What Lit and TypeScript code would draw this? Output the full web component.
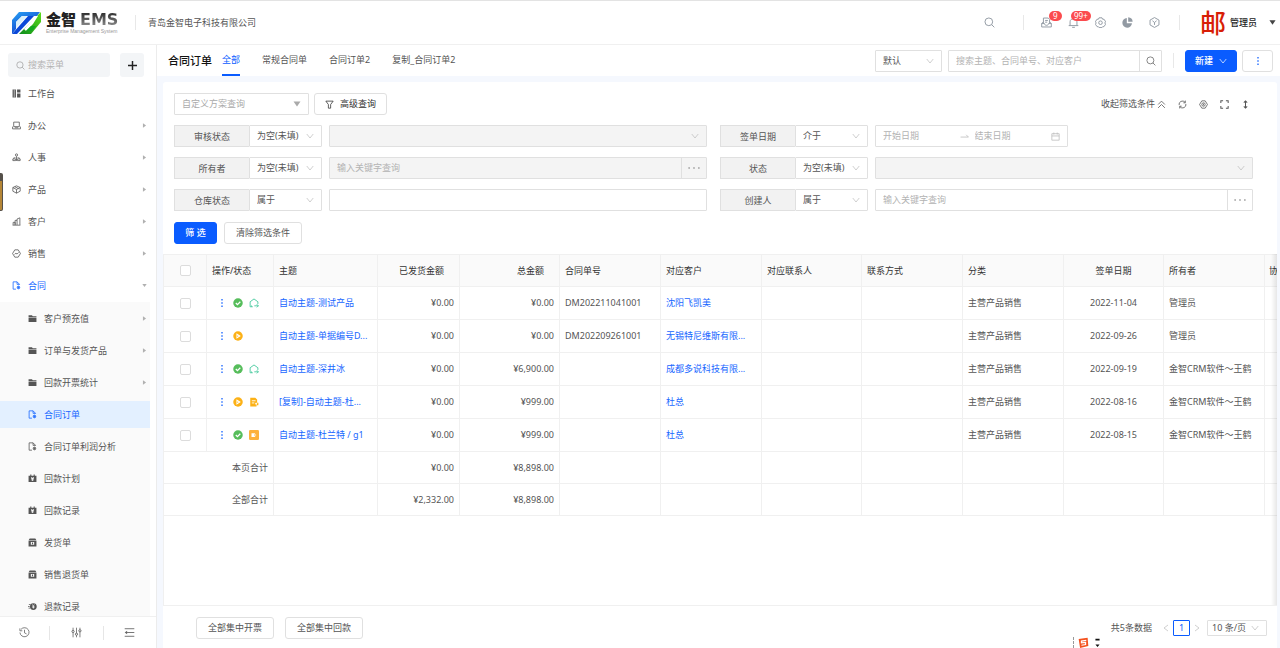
import { LitElement, html, css, svg, nothing, TemplateResult } from "lit";
import { customElement, state } from "lit/decorators.js";
import { classMap } from "lit/directives/class-map.js";

/* ---------- icons ---------- */

const line = (body: unknown, cls = "ic") =>
  html`<svg class=${cls} viewBox="0 0 16 16" fill="none" stroke="currentColor" stroke-width="1.4" aria-hidden="true">${body}</svg>`;
const solid = (body: unknown, cls = "ic") =>
  html`<svg class=${cls} viewBox="0 0 16 16" fill="currentColor" aria-hidden="true">${body}</svg>`;

const icons: Record<string, () => TemplateResult> = {
  search: () => line(svg`<circle cx="7" cy="7" r="5.6"/><path d="M11 11l4 4"/>`),
  plus: () => line(svg`<path d="M8 0v16M0 8h16" stroke-width="2.6"/>`),
  board: () => solid(svg`<path d="M1 1h6v14H1zM9 1h6v5H9zM9 8h6v7H9z"/><path d="M4 1v14" stroke="#fff"/>`),
  desk: () => line(svg`<path d="M3 2h10v8H3zM1 10v4h14v-4M5 12h6"/>`),
  people: () => line(svg`<circle cx="8" cy="3.5" r="2"/><path d="M8 6v8M2 9.5l4-1.500M14 9.500l-4-1.500M1.500 10.500h5v3h-5zM9.500 10.500h5v3h-5z"/>`),
  box: () => line(svg`<path d="M8 1.500l6.500 3v6.500L8 14.500 1.500 11V4.500zM1.500 4.500L8 8l6.500-3.500M8 8v6.500M5 3l6.500 3.500"/>`),
  chart: () => line(svg`<path d="M1 14.500h14M2 14V9.500h3.500V14M5.500 14V6H9v8M9 6V3.500L14 1.500V14"/>`),
  sale: () => line(svg`<path d="M5 1.500h6L15 8l-4 6.500H5L1 8zM4.500 9.500l2.500-2 2 1.500 3-3"/>`),
  contract: () => line(svg`<path d="M7 14.500H2v-13h7l4 4V7M9 1.500V6h4"/><circle cx="11.500" cy="11.500" r="2.200"/><path d="M11.500 8.500v6M8.800 10l5.400 3M14.200 10l-5.400 3" stroke-width="1"/>`),
  folder: () => solid(svg`<path d="M1 2h6l1.500 2H15v2H1zM1 7h14v7H1z"/>`),
  cash: () => solid(svg`<path fill-rule="evenodd" d="M4 1h2v2h4V1h2v2h3v11H1V3h3zM5 5.500l2 2.200H5.500v1.200h1.800v1H5.500V11h1.800v1.500h1.400V11h1.800V9.900H8.700v-1h1.800V7.700H9l2-2.200H9.500L8 7.200 6.500 5.500z"/>`),
  cargo: () => solid(svg`<path fill-rule="evenodd" d="M3 1h10l2 3H1zM1 5h14v10H1zM5 7v5h6V7zM7 8h2v3H7z"/>`),
  refund: () => solid(svg`<path fill-rule="evenodd" d="M9.500 2a6 6 0 1 1 0 12 6 6 0 0 1 0-12zM7 4.500l1.800 2.700H7.300v1h1.500v1H7.300v1h1.500v1.500h1.400v-1.500h1.500v-1h-1.500v-1h1.500v-1h-1.500L12 4.500h-1.300L9.500 6.500 8.300 4.500z"/><path d="M0 7h3v1.500H0zM1 10h3v1.500H1zM1.500 4h3v1.500h-3z"/>`),
  history: () => line(svg`<path d="M3 3.300A6.600 6.600 0 1 1 1.400 8M1.300 2v3.500h3.500M8 4v4.500l3 1.500" stroke-width="1.200"/>`, "ic lg"),
  sliders: () => line(svg`<path d="M3 1v4M3 8v7M8 1v8M8 12v3M13 1v3M13 7v8" stroke-width="1.200"/><circle cx="3" cy="6.500" r="1.600"/><circle cx="8" cy="10.500" r="1.600"/><circle cx="13" cy="5.500" r="1.600"/>`, "ic lg"),
  outdent: () => line(svg`<path d="M1 2.500h14M3 8h12M1 13.500h14" stroke-width="1.300"/><path d="M4.500 5.500v5L1 8z" fill="currentColor" stroke="none"/>`, "ic lg"),
  inbox: () => line(svg`<path d="M3.500 9V1.500h7l2 2V9M6 5h4M6 7.500h3M3.500 7L1 9.500v5h14v-5L12.500 7M1 9.500h4c0 3.500 6 3.500 6 0h4"/>`, "ic lg"),
  bell: () => line(svg`<path d="M1 12.500h14M3 12.500V7c0-6 10-6 10 0v5.500M6 15h4"/>`, "ic lg"),
  gear: () => line(svg`<path d="M5.800 1.200h4.400l.8 2 2.200.1L15.500 7l-1.200 1.500 1 2.200-2.300 3.300-2 .2-.9 1.200H5.900L5 14.200l-2-.2L.7 10.700l1-2.200L.5 7l2.300-3.700L5 3.200z" stroke-linejoin="round"/><circle cx="8" cy="8.300" r="2.600"/>`, "ic lg"),
  pie: () => solid(svg`<path d="M7 1.500V9h7.500A7 7 0 1 1 7 1.500z"/><path d="M9 .5A7 7 0 0 1 15.500 7H9z"/>`, "ic lg"),
  hexa: () => line(svg`<path d="M8 .8l6.500 3.700v7L8 15.200l-6.500-3.700v-7zM5 5.500l3 2.500 3-2.500M8 8v3.500"/>`, "ic lg"),
  caret: () => solid(svg`<path d="M1 3h14L8 13z"/>`, "ic xs"),
  right: () => solid(svg`<path d="M3 1l10 7-10 7z"/>`, "ic tiny"),
  down: () => solid(svg`<path d="M1 3h14L8 13z"/>`, "ic tiny"),
  chevron: () => line(svg`<path d="M1.500 4L8 12l6.500-8"/>`, "ic chev"),
  funnel: () => line(svg`<path d="M1.500 2h13L10 8v6.500H6V8z"/>`),
  fold: () => line(svg`<path d="M2 8l6-6 6 6M2 14l6-6 6 6"/>`),
  refresh: () => line(svg`<path d="M2 9a6 6 0 0 1 10.500-5M14 7a6 6 0 0 1-10.500 5M13 1v4H9.500M3 15v-4h3.500"/>`),
  target: () => line(svg`<path d="M5 1.500h6L15 8l-4 6.500H5L1 8z"/><circle cx="8" cy="8" r="3"/><path d="M8 6.500v3"/>`),
  expand: () => line(svg`<path d="M1.500 5.500v-4h4M10.500 1.500h4v4M14.500 10.500v4h-4M5.500 14.500h-4v-4" stroke-width="1.800"/>`),
  height: () => line(svg`<path d="M8 2v12M5 4.500L8 1.500l3 3M5 11.500l3 3 3-3" stroke-width="1.800"/>`),
  vdots: () => solid(svg`<path d="M7 1.500h2v2.500H7zM7 6.800h2v2.500H7zM7 12h2v2.500H7z"/>`, "ic blue"),
  hdots: () => solid(svg`<circle cx="1.500" cy="8" r="1.200"/><circle cx="8" cy="8" r="1.200"/><circle cx="14.500" cy="8" r="1.200"/>`, "ic lg"),
  calendar: () => line(svg`<path d="M1.500 3h13v11.500h-13zM1.500 7h13M5 1v3.500M11 1v3.500"/>`),
  arrow: () => line(svg`<path d="M1 9h14l-4-4"/>`),
  prev: () => line(svg`<path d="M12 2L4 8l8 6"/>`, "ic chev"),
  next: () => line(svg`<path d="M4 2l8 6-8 6"/>`, "ic chev"),
  ok: () => html`<svg class="ic st" viewBox="0 0 16 16" aria-hidden="true"><circle cx="8" cy="8" r="7.600" fill="#56bd5b"/><path d="M4.500 8l2.600 2.600L11.700 6" fill="none" stroke="#fff" stroke-width="2"/></svg>`,
  play: () => html`<svg class="ic st" viewBox="0 0 16 16" aria-hidden="true"><circle cx="8" cy="8" r="7.600" fill="#fcb116"/><path d="M5.500 3.500L12.500 8l-7 4.500z" fill="#fff"/><circle cx="7.500" cy="8" r="1" fill="#fcb116"/></svg>`,
  house: () => html`<svg class="ic st" viewBox="0 0 16 16" fill="none" stroke="#4ccba0" stroke-width="1.500" aria-hidden="true"><path d="M6 14H1.800V6L8 1.500 14.200 6v3.500M4 14v-2M8.500 12.500h6.500M12.500 10l2.500 2.500-2.500 2.500"/></svg>`,
  note: () => html`<svg class="ic st" viewBox="0 0 16 16" aria-hidden="true"><path d="M2 1h8l3 3v5h2v4h-3v2H2z" fill="#fcb116"/><path d="M4.500 6h6M4.500 9.500h4M10 10.500h3M11.500 9v4" stroke="#fff" stroke-width="1.400"/></svg>`,
  tag: () => html`<svg class="ic st" viewBox="0 0 16 16" aria-hidden="true"><rect width="16" height="16" rx="2" fill="#fdb13c"/><path d="M4 5h5l3 3-3 3H4z" fill="#fff"/><path d="M8 8h5" stroke="#fdb13c" stroke-width="1.500"/></svg>`,
};

/* ---------- data ---------- */

interface MenuEntry { icon: string; label: string; more?: boolean; active?: boolean }

const MENU: MenuEntry[] = [
  { icon: "board", label: "工作台" },
  { icon: "desk", label: "办公", more: true },
  { icon: "people", label: "人事", more: true },
  { icon: "box", label: "产品", more: true },
  { icon: "chart", label: "客户", more: true },
  { icon: "sale", label: "销售", more: true },
];

const SUBMENU: MenuEntry[] = [
  { icon: "folder", label: "客户预充值", more: true },
  { icon: "folder", label: "订单与发货产品", more: true },
  { icon: "folder", label: "回款开票统计", more: true },
  { icon: "contract", label: "合同订单", active: true },
  { icon: "contract", label: "合同订单利润分析" },
  { icon: "cash", label: "回款计划" },
  { icon: "cash", label: "回款记录" },
  { icon: "cargo", label: "发货单" },
  { icon: "cargo", label: "销售退货单" },
  { icon: "refund", label: "退款记录" },
];

const TABS = ["全部", "常规合同单", "合同订单2", "复制_合同订单2"];

interface Order {
  status: string[]; subject: string; shipped: string; total: string;
  code: string; customer: string; date: string; owner: string;
}

const ORDERS: Order[] = [
  { status: ["ok", "house"], subject: "自动主题-测试产品", shipped: "¥0.00", total: "¥0.00", code: "DM202211041001", customer: "沈阳飞凯美", date: "2022-11-04", owner: "管理员" },
  { status: ["play"], subject: "自动主题-单据编号D...", shipped: "¥0.00", total: "¥0.00", code: "DM202209261001", customer: "无锡特尼维斯有限...", date: "2022-09-26", owner: "管理员" },
  { status: ["ok", "house"], subject: "自动主题-深井冰", shipped: "¥0.00", total: "¥6,900.00", code: "", customer: "成都多说科技有限...", date: "2022-09-19", owner: "金智CRM软件～王鹤" },
  { status: ["play", "note"], subject: "[复制]-自动主题-杜...", shipped: "¥0.00", total: "¥999.00", code: "", customer: "杜总", date: "2022-08-16", owner: "金智CRM软件～王鹤" },
  { status: ["ok", "tag"], subject: "自动主题-杜兰特 / g1", shipped: "¥0.00", total: "¥999.00", code: "", customer: "杜总", date: "2022-08-15", owner: "金智CRM软件～王鹤" },
];

const SUMS = [
  { label: "本页合计", shipped: "¥0.00", total: "¥8,898.00" },
  { label: "全部合计", shipped: "¥2,332.00", total: "¥8,898.00" },
];

/* ---------- application ---------- */

@customElement("app-root")
export class AppRoot extends LitElement {
  @state() private tab = 0;

  static styles = css`
    :host {
      display: flex;
      flex-direction: column;
      height: 100vh;
      overflow: hidden;
      position: relative;
      box-sizing: border-box;
      border-top: 1px solid #e3e3e3;
      background: #fff;
      color: #555;
      font: 9px/14px "Noto Sans", "Noto Sans CJK SC", sans-serif;
      --line: #f0f0f0;
      --edge: #e0e0e0;
      --blue: #0a5cff;
    }
    *, *::before, *::after { box-sizing: border-box; }
    a { color: inherit; text-decoration: none; }
    button, input, select { font: inherit; color: inherit; margin: 0; padding: 0; border: 0; background: none; border-radius: 0; min-width: 0; }
    input::placeholder { color: #b3b3b3; opacity: 1; }
    select { appearance: none; opacity: 1; }
    .ic { width: 9px; height: 9px; flex: none; display: block; }
    .ic.lg { width: 12px; height: 12px; }
    .ic.st { width: 10px; height: 10px; }
    .ic.xs { width: 8px; height: 8px; }
    .ic.tiny { width: 5px; height: 5px; color: #b0b0b0; }
    .ic.chev { width: 8px; height: 8px; color: #bbb; }
    .ic.blue { width: 10px; height: 10px; color: var(--blue); }

    /* top bar */
    .top { display: flex; align-items: center; height: 44px; flex: none; padding-left: 12px; padding-right: 4px; border-bottom: 1px solid var(--line); }
    .logo { width: 29px; height: 24px; flex: none; }
    .brand { margin-left: 5px; width: 89px; }
    .brand-name { display: flex; align-items: center; gap: 4px; height: 17px; color: #222; font-size: 15px; line-height: 17px; font-weight: 900; white-space: nowrap; }
    .ems { font-family: "DejaVu Sans", sans-serif; font-size: 16px; font-weight: 700; background: linear-gradient(#222, #999); -webkit-background-clip: text; color: transparent; }
    .brand-sub { font: 5px/7px "Liberation Sans", sans-serif; color: #999; white-space: nowrap; }
    .sep { width: 1px; height: 15px; background: #e8e8e8; flex: none; }
    .company { margin-left: 12px; flex: 1; }
    .tools { display: flex; align-items: center; color: #929aa3; }
    .tool { display: flex; position: relative; color: inherit; }
    .tools .ic { width: 11px; height: 11px; }
    .tools > .tool { margin-right: 28px; }
    .quick { display: flex; gap: 16px; margin: 0 19px 0 17px; }
    .badge { position: absolute; left: 8px; top: -6px; height: 10px; padding: 0 4px; border-radius: 5px; background: #fb4b4e; color: #fff; font-size: 8px; line-height: 10px; }
    .badge.wide { left: 3px; padding: 0 3px; }
    .user { display: flex; align-items: center; margin-left: 20px; color: #222; font-weight: 500; }
    .seal { color: #d81e06; font-size: 26px; line-height: 30px; font-weight: 500; width: 26px; }
    .user-name { margin: 0 12px 0 4px; }
    .tools .user .ic { color: #444; width: 7px; height: 7px; }

    .body { display: flex; flex: 1; min-height: 0; }

    /* sidebar */
    .side { width: 157px; flex: none; display: flex; flex-direction: column; border-right: 1px solid #ececec; }
    .side-top { display: flex; gap: 10px; padding: 8px 12px 1px 8px; flex: none; }
    .side-search { display: flex; align-items: center; gap: 3px; flex: 1; min-width: 0; height: 24px; padding: 0 8px; border-radius: 3px; background: #f3f5f7; color: #a5a5a5; }
    .side-search input { flex: 1; }
    .add { display: grid; place-items: center; width: 24px; height: 24px; border-radius: 3px; background: #f3f5f7; color: #222; }
    .nav { flex: 1; min-height: 0; overflow: hidden; display: flex; flex-direction: column; }
    .item { display: flex; align-items: center; gap: 7px; height: 27px; margin: 2px 6px 3px 0; padding: 0 3px 0 12px; flex: none; }
    .item .label { flex: 1; }
    .item.on { color: #1766ff; }
    .sub { display: flex; flex-direction: column; margin-right: 6px; padding-top: 1px; background: #fafafa; flex: none; }
    .sub .item { margin-right: 0; padding-left: 28px; }
    .sub .item.on { background: #e3f0ff; }
    .side-foot { display: grid; grid-template-columns: 49px 54px 1fr; height: 32px; border-top: 1px solid var(--line); flex: none; }
    .side-foot button { position: relative; display: grid; place-items: center; color: #666; }
    .side-foot button + button::before { content: ""; position: absolute; left: 0; top: 9px; width: 1px; height: 14px; background: #e6e6e6; }
    .side-foot .ic { width: 11px; height: 11px; }

    /* page */
    .page { flex: 1; min-width: 0; display: flex; flex-direction: column; background: #f5f8fe; }
    .head { display: flex; align-items: center; height: 31px; flex: none; padding: 0 7px 0 11px; background: #fff; }
    h1 { margin: 0 10px 0 0; font-size: 11px; line-height: 16px; font-weight: 500; color: #111; }
    .tabs { display: flex; gap: 22px; flex: 1; height: 100%; }
    .tab { height: 100%; border-bottom: 2px solid transparent; padding-top: 1px; white-space: nowrap; }
    .tab.on { color: var(--blue); border-bottom-color: var(--blue); }
    .box { display: flex; align-items: center; height: 22px; border: 1px solid var(--edge); border-radius: 1px; background: #fff; min-width: 0; }
    .box input { flex: 1; align-self: stretch; padding: 0 7px; }
    .box > button { align-self: stretch; width: 25px; display: grid; place-items: center; border-left: 1px solid var(--edge); color: #aaa; }
    .box.off { background: #f4f4f4; }
    .pick { position: relative; }
    .pick select { width: 100%; align-self: stretch; padding: 0 7px; }
    .pick .ic { position: absolute; right: 7px; pointer-events: none; }
    .soft { color: #aaa; }
    .w-view { width: 67px; }
    .find { width: 214px; margin: 0 11px 0 6px; }
    .find > button { width: 22px; color: #777; }
    .find .ic { width: 10px; height: 10px; }
    .btn { display: inline-flex; align-items: center; justify-content: center; gap: 6px; height: 22px; padding: 0 10px; border: 1px solid var(--edge); border-radius: 3px; background: #fff; white-space: nowrap; }
    .btn.primary { background: var(--blue); border-color: var(--blue); color: #fff; font-weight: 500; }
    .btn.primary .ic { color: #fff; }
    .new { width: 52px; margin: 0 5px 0 11px; }
    .dots { width: 31px; }

    .card { flex: 1; min-height: 0; margin: 6px 3px 0 6px; display: flex; flex-direction: column; background: #fff; border-radius: 3px 3px 0 0; }
    .filters { padding: 11px 24px 10px 11px; flex: none; }
    .bar { display: flex; gap: 5px; align-items: center; }
    .send { gap: 7px; }
    .send .primary { width: 43px; }
    .send .btn { padding: 0 11px; }
    .scheme { width: 135px; }
    .scheme .ic { color: #aaa; }
    .strong { color: #333; }
    .acts { margin-left: auto; display: flex; align-items: center; gap: 12px; padding-right: 3px; }
    .acts button { display: flex; align-items: center; gap: 2px; }
    .grid { display: grid; grid-template-columns: 1fr 1fr; gap: 10px 13px; margin: 10px 0 11px; }
    .field { display: flex; min-width: 0; }
    .field label { width: 75px; flex: none; height: 22px; line-height: 21px; text-align: center; border: 1px solid var(--edge); border-right: 0; background: #f2f2f2; }
    .op { width: 73px; flex: none; margin-right: 7px; }
    .val { flex: 1; }
    .range { flex: none; width: 193px; padding-right: 7px; color: #bbb; }
    .range input + .ic + input { padding-left: 6px; }

    .sheet { flex: 1; min-height: 0; position: relative; overflow: hidden; border-bottom: 1px solid var(--line); border-left: 1px solid var(--line); }
    .sheet::after { content: ""; position: absolute; right: 0; top: 0; bottom: 0; width: 6px; background: linear-gradient(to right, #fff0, #00000018); }
    table { border-collapse: separate; border-spacing: 0; table-layout: fixed; width: 100%; }
    th, td { height: 33px; padding: 0 5px; text-align: left; font-weight: 400; border-right: 1px solid var(--line); border-bottom: 1px solid var(--line); white-space: nowrap; overflow: hidden; }
    th { background: #fafafa; color: #333; border-top: 1px solid var(--line); }
    th:last-child, td:last-child { padding: 0 0 0 4px; border-right: 0; }
    tfoot td { height: 32px; }
    .c-check { width: 43px; text-align: center; }
    .c-state { width: 67px; }
    .c-title { width: 104px; }
    .c-paid { width: 82px; }
    .c-std { width: 101px; }
    .c-alt { width: 100px; }
    .num { text-align: right; }
    .mid { text-align: center; }
    th.num { padding-right: 15px; }
    .tick { appearance: none; display: block; width: 11px; height: 11px; margin: 0 auto; border: 1px solid #dcdcdc; border-radius: 2px; background: #fff; }
    .state { display: flex; align-items: center; gap: 6px; padding-left: 5px; }
    .state button { display: flex; }
    .link { color: #1766ff; }

    .foot { display: flex; align-items: center; height: 42px; flex: none; padding: 2px 10px 0 33px; }
    .foot .btn { margin-right: 11px; width: 78px; }
    .pager { margin-left: auto; display: flex; align-items: center; gap: 4px; }
    .pager button { display: grid; place-items: center; height: 16px; }
    .pager .cur { width: 17px; margin: 0 -1px; border: 1px solid var(--blue); border-radius: 1px; color: var(--blue); }
    .count { margin-right: 6px; }
    .size { width: 60px; height: 16px; margin-left: 2px; }
    .size select { padding: 0 4px; }

    /* floating desktop widgets */
    .grip { position: absolute; left: 0; top: 172px; width: 3px; height: 38px; border-radius: 0 2px 2px 0; border: 1px solid #55504a; border-left: 0; border-top-width: 8px; background: #b58636; }
    .ime { position: absolute; left: 1073px; bottom: 0; display: flex; align-items: center; gap: 3px; height: 11px; padding-left: 4px; border-left: 1px dashed #999; }
    .ime .ic { width: 11px; height: 11px; }
  `;

  private item(m: MenuEntry) {
    return html`<a href="#" class=${classMap({ item: true, on: !!m.active })}>
      ${icons[m.icon]()}<span class="label">${m.label}</span>${m.more ? icons.right() : nothing}
    </a>`;
  }

  private pick(cls: string, id: string, name: string, value: string, disabled = false, icon = "chevron") {
    return html`<span class="box pick ${cls} ${disabled ? "off" : ""}">
      <select id=${id} aria-label=${name} ?disabled=${disabled}><option>${value}</option></select>${icons[icon]()}
    </span>`;
  }

  private keyword(name: string, disabled = false) {
    return html`<span class="box val ${disabled ? "off" : ""}">
      <input type="text" aria-label=${name} placeholder="输入关键字查询" ?disabled=${disabled}>
      <button aria-label="选择">${icons.hdots()}</button>
    </span>`;
  }

  private field(id: string, label: string, op: string, value: TemplateResult) {
    return html`<div class="field">
      <label for=${id}>${label}</label>
      ${this.pick("op", id, label, op)}${value}
    </div>`;
  }

  private renderTop() {
    return html`<header class="top">
      <svg class="logo" viewBox="0 0 29 24" aria-hidden="true">
        <defs>
          <linearGradient id="lb" x1="0" y1="0" x2="0.6" y2="1"><stop offset="0" stop-color="#2aa3f5"/><stop offset="1" stop-color="#0a35c8"/></linearGradient>
          <linearGradient id="lg" x1="0" y1="1" x2="1" y2="0"><stop offset="0" stop-color="#0c8c1c"/><stop offset="1" stop-color="#5ddc1a"/></linearGradient>
        </defs>
        <path d="M0 9L7 1h21l-3 4H10L4 11v7l-4 5z" fill="url(#lb)"/>
        <path d="M0 23L16 5h6L5 23z" fill="#0b49d8"/>
        <path d="M4 17v-6l6-6h5z" fill="#d9f0fb"/>
        <path d="M7 23L29 1v10L19 23z" fill="url(#lg)"/>
        <path d="M12 18L24 5h2l-5 8-7 7z" fill="#fff"/>
        <path d="M14 20l5-5h5l-4 5z" fill="#12a81f"/>
      </svg>
      <div class="brand">
        <div class="brand-name">金智<span class="ems">EMS</span></div>
        <div class="brand-sub">Enterprise Management System</div>
      </div>
      <span class="sep"></span>
      <span class="company">青岛金智电子科技有限公司</span>
      <div class="tools">
        <button class="tool" aria-label="搜索">${icons.search()}</button>
        <span class="sep"></span>
        <div class="quick">
          <button class="tool" aria-label="消息">${icons.inbox()}<span class="badge">9</span></button>
          <button class="tool" aria-label="提醒">${icons.bell()}<span class="badge wide">99+</span></button>
          <button class="tool" aria-label="设置">${icons.gear()}</button>
          <button class="tool" aria-label="统计">${icons.pie()}</button>
          <button class="tool" aria-label="应用">${icons.hexa()}</button>
        </div>
        <span class="sep"></span>
        <button class="user"><span class="seal">邮</span><span class="user-name">管理员</span>${icons.caret()}</button>
      </div>
    </header>`;
  }

  private renderSide() {
    return html`<aside class="side">
      <div class="side-top">
        <label class="side-search">${icons.search()}<input type="text" aria-label="搜索菜单" placeholder="搜索菜单"></label>
        <button class="add" aria-label="新增">${icons.plus()}</button>
      </div>
      <nav class="nav">
        ${MENU.map((m) => this.item(m))}
        <a href="#" class="item on">${icons.contract()}<span class="label">合同</span>${icons.down()}</a>
        <div class="sub">${SUBMENU.map((m) => this.item(m))}</div>
      </nav>
      <div class="side-foot">
        <button aria-label="历史">${icons.history()}</button>
        <button aria-label="配置">${icons.sliders()}</button>
        <button aria-label="收起">${icons.outdent()}</button>
      </div>
    </aside>`;
  }

  private renderHead() {
    return html`<div class="head">
      <h1>合同订单</h1>
      <div class="tabs" role="tablist">
        ${TABS.map((t, i) => html`<button role="tab" class=${classMap({ tab: true, on: i === this.tab })} @click=${() => (this.tab = i)}>${t}</button>`)}
      </div>
      ${this.pick("w-view", "view", "视图", "默认")}
      <span class="box find">
        <input type="text" aria-label="搜索" placeholder="搜索主题、合同单号、对应客户">
        <button aria-label="搜索">${icons.search()}</button>
      </span>
      <span class="sep"></span>
      <button class="btn primary new">新建${icons.chevron()}</button>
      <button class="btn dots" aria-label="更多">${icons.vdots()}</button>
    </div>`;
  }

  private renderFilters() {
    return html`<section class="filters">
      <div class="bar">
        ${this.pick("scheme soft", "scheme", "方案", "自定义方案查询", false, "caret")}
        <button class="btn strong">${icons.funnel()}高级查询</button>
        <div class="acts">
          <button>收起筛选条件 ${icons.fold()}</button>
          <button aria-label="刷新">${icons.refresh()}</button>
          <button aria-label="设置">${icons.target()}</button>
          <button aria-label="全屏">${icons.expand()}</button>
          <button aria-label="行高">${icons.height()}</button>
        </div>
      </div>
      <div class="grid">
        ${this.field("f-audit", "审核状态", "为空(未填)", this.pick("val", "v-audit", "审核状态值", "", true))}
        ${this.field("f-date", "签单日期", "介于", html`<span class="box range">
          <input type="text" aria-label="开始日期" placeholder="开始日期">${icons.arrow()}<input type="text" aria-label="结束日期" placeholder="结束日期">${icons.calendar()}
        </span>`)}
        ${this.field("f-owner", "所有者", "为空(未填)", this.keyword("所有者关键字", true))}
        ${this.field("f-state", "状态", "为空(未填)", this.pick("val", "v-state", "状态值", "", true))}
        ${this.field("f-store", "仓库状态", "属于", html`<span class="box val"><input type="text" aria-label="仓库状态值"></span>`)}
        ${this.field("f-maker", "创建人", "属于", this.keyword("创建人关键字"))}
      </div>
      <div class="bar send">
        <button class="btn primary">筛 选</button>
        <button class="btn">清除筛选条件</button>
      </div>
    </section>`;
  }

  private renderTable() {
    return html`<div class="sheet"><table>
      <thead><tr>
        <th class="c-check"><input class="tick" type="checkbox" aria-label="全选"></th>
        <th class="c-state">操作/状态</th>
        <th class="c-title">主题</th>
        <th class="c-paid num">已发货金额</th>
        <th class="c-alt num">总金额</th>
        <th class="c-std">合同单号</th>
        <th class="c-std">对应客户</th>
        <th class="c-alt">对应联系人</th>
        <th class="c-std">联系方式</th>
        <th class="c-std">分类</th>
        <th class="c-alt mid">签单日期</th>
        <th class="c-std">所有者</th>
        <th>协</th>
      </tr></thead>
      <tbody>
        ${ORDERS.map((o) => html`<tr>
          <td><input class="tick" type="checkbox" aria-label=${o.subject}></td>
          <td><div class="state"><button aria-label="操作">${icons.vdots()}</button>${o.status.map((s) => icons[s]())}</div></td>
          <td><a class="link" href="#">${o.subject}</a></td>
          <td class="num">${o.shipped}</td>
          <td class="num">${o.total}</td>
          <td>${o.code}</td>
          <td><a class="link" href="#">${o.customer}</a></td>
          <td></td><td></td>
          <td>主营产品销售</td>
          <td class="mid">${o.date}</td>
          <td>${o.owner}</td>
          <td></td>
        </tr>`)}
      </tbody>
      <tfoot>
        ${SUMS.map((s) => html`<tr>
          <td colspan="2" class="num">${s.label}</td><td></td>
          <td class="num">${s.shipped}</td><td class="num">${s.total}</td>
          <td></td><td></td><td></td><td></td><td></td><td></td><td></td><td></td>
        </tr>`)}
      </tfoot>
    </table></div>`;
  }

  render() {
    return html`
      ${this.renderTop()}
      <div class="body">
        ${this.renderSide()}
        <main class="page">
          ${this.renderHead()}
          <div class="card">
            ${this.renderFilters()}
            ${this.renderTable()}
            <footer class="foot">
              <button class="btn">全部集中开票</button>
              <button class="btn">全部集中回款</button>
              <div class="pager">
                <span class="count">共5条数据</span>
                <button aria-label="上一页">${icons.prev()}</button>
                <button class="cur">1</button>
                <button aria-label="下一页">${icons.next()}</button>
                ${this.pick("size", "size", "每页条数", "10 条/页")}
              </div>
            </footer>
          </div>
        </main>
      </div>
      <span class="grip"></span>
      <span class="ime">
        <svg class="ic" viewBox="0 0 16 16" aria-hidden="true"><path d="M1 3l13-2 1 12-12 3z" fill="#f4511e"/><path d="M12 5L5 6v2.500l6-.5v3l-6 1" fill="none" stroke="#fff" stroke-width="1.800"/></svg>
        <svg class="ic" viewBox="0 0 16 16" aria-hidden="true"><path d="M5 5h6v-2.500H5zM5 11h6l-3 3.500z" fill="#111"/></svg>
      </span>
    `;
  }
}
